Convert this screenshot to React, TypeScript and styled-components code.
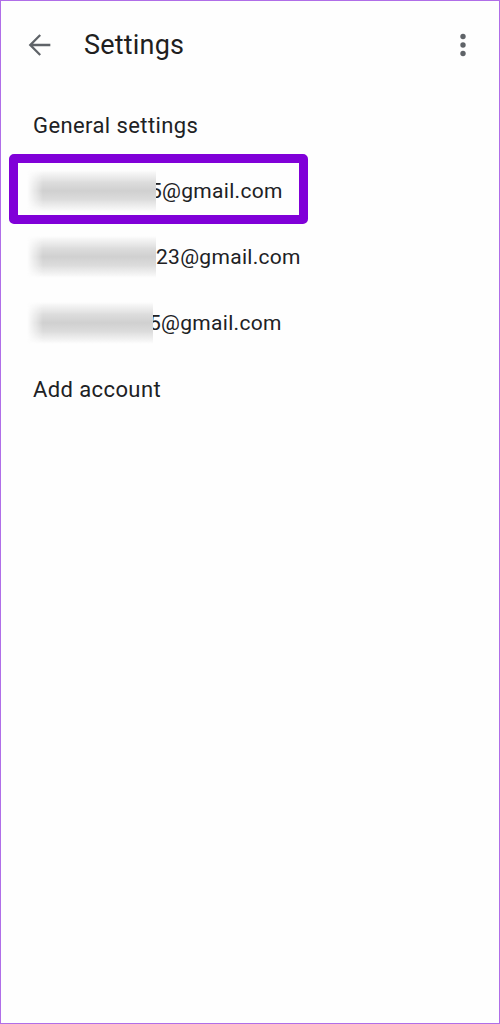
import React from "react";
import styled, { createGlobalStyle } from "styled-components";

const Global = createGlobalStyle`
  html, body { margin: 0; padding: 0; background: #ffffff; }
  body { font-family: Roboto, "Noto Sans", "Liberation Sans", sans-serif; }
  *, *::before, *::after { box-sizing: border-box; }
`;

const Screen = styled.div`
  width: 500px;
  height: 1024px;
  border: 1px solid #b06ee8;
  background: #fefefe;
  display: flex;
  flex-direction: column;
`;

const Header = styled.header`
  height: 88px;
  display: flex;
  align-items: center;
  padding: 0 19px 0 21px;
`;

const IconButton = styled.span`
  width: 34px;
  height: 34px;
  display: flex;
  align-items: center;
  justify-content: center;
  color: #5f6368;
`;

const MenuButton = styled(IconButton)`
  margin-left: auto;
`;

const Title = styled.h1`
  margin: 0 0 0 28px;
  font-size: 27px;
  font-weight: 400;
  color: #1f1f1f;
  letter-spacing: 0.2px;
`;

const List = styled.div`
  padding-top: 3px;
  display: flex;
  flex-direction: column;
`;

const Row = styled.div<{ $highlight?: boolean; $label?: boolean }>`
  position: relative;
  height: 66px;
  display: flex;
  align-items: center;
  padding-left: 32px;
  font-size: ${(p) => (p.$label ? "22px" : "21px")};
  letter-spacing: ${(p) => (p.$label ? "0.4px" : "0.3px")};
  color: #202124;
  ${(p) =>
    p.$highlight &&
    `
    &::after {
      content: "";
      position: absolute;
      left: 8px;
      top: -4px;
      width: 299px;
      height: 70px;
      border: 9px solid #8000d8;
      border-radius: 5px;
      pointer-events: none;
    }
  `}
`;

const Blur = styled.span<{ $width: number; $overlap: number }>`
  display: inline-block;
  position: relative;
  z-index: 1;
  flex: none;
  width: ${(p) => p.$width}px;
  height: 42px;
  margin-left: -6px;
  margin-right: ${(p) => -p.$overlap}px;
  background: linear-gradient(
    to bottom,
    rgba(255, 255, 255, 0) 0%,
    #dcdcdc 30%,
    #d0d0d0 50%,
    #dcdcdc 70%,
    rgba(255, 255, 255, 0) 100%
  );
  -webkit-mask-image: linear-gradient(to right, transparent 0, #000 16px, #000 100%);
  mask-image: linear-gradient(to right, transparent 0, #000 16px, #000 100%);
`;

const Address = styled.span`
  white-space: nowrap;
`;

const BackIcon = () => (
  <svg width="34" height="34" viewBox="0 0 24 24" fill="currentColor">
    <path d="M20 11.1H7.83l5.59-5.59L12.3 4.4 4.7 12l7.6 7.6 1.12-1.11-5.59-5.59H20v-1.8z" />
  </svg>
);

const MoreIcon = () => (
  <svg width="34" height="34" viewBox="0 0 24 24" fill="currentColor">
    <circle cx="12" cy="6" r="1.9" />
    <circle cx="12" cy="12" r="1.9" />
    <circle cx="12" cy="18" r="1.9" />
  </svg>
);

const accounts = [
  { suffix: "5@gmail.com", width: 129, overlap: 6, highlight: true },
  { suffix: "23@gmail.com", width: 129, overlap: 0, highlight: false },
  { suffix: "5@gmail.com", width: 126, overlap: 4, highlight: false },
];

export default function App() {
  return (
    <>
      <Global />
      <Screen>
        <Header>
          <IconButton>
            <BackIcon />
          </IconButton>
          <Title>Settings</Title>
          <MenuButton>
            <MoreIcon />
          </MenuButton>
        </Header>
        <List>
          <Row $label>General settings</Row>
          {accounts.map((a, i) => (
            <Row key={i} $highlight={a.highlight}>
              <Blur $width={a.width} $overlap={a.overlap} />
              <Address>{a.suffix}</Address>
            </Row>
          ))}
          <Row $label>Add account</Row>
        </List>
      </Screen>
    </>
  );
}
